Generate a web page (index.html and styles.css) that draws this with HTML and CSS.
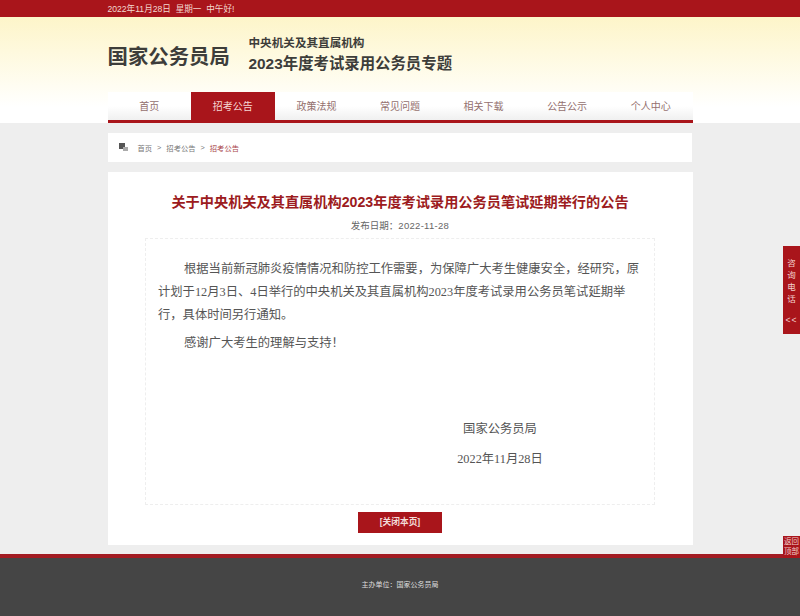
FILE: index.html
```html
<!DOCTYPE html>
<html lang="zh-CN">
<head>
    <meta charset="UTF-8">
    <meta name="viewport" content="width=device-width, initial-scale=1.0">
    <title>关于中央机关及其直属机构2023年度考试录用公务员笔试延期举行的公告</title>
    <link rel="stylesheet" href="styles.css">
</head>
<body>
    <div class="topbar">
        <div class="wrap topbar-text">2022年11月28日&nbsp; 星期一&nbsp; 中午好!</div>
    </div>

    <header class="header">
        <div class="wrap">
            <div class="brand">
                <div class="brand-name">国家公务员局</div>
                <div class="brand-sub">
                    <div class="brand-sub-top">中央机关及其直属机构</div>
                    <div class="brand-sub-main">2023年度考试录用公务员专题</div>
                </div>
            </div>
            <nav class="nav">
                <a class="nav-item">首页</a>
                <a class="nav-item active">招考公告</a>
                <a class="nav-item">政策法规</a>
                <a class="nav-item">常见问题</a>
                <a class="nav-item">相关下载</a>
                <a class="nav-item">公告公示</a>
                <a class="nav-item">个人中心</a>
            </nav>
        </div>
    </header>

    <main class="wrap">
        <div class="crumbs">
            <svg class="crumbs-icon" width="9" height="9" viewBox="0 0 9 9">
                <rect x="0" y="0" width="6" height="6" fill="#555"/>
                <rect x="4" y="4" width="5" height="4" fill="#aaa"/>
            </svg>
            <span>首页</span>
            <span class="crumbs-sep">&gt;</span>
            <span>招考公告</span>
            <span class="crumbs-sep">&gt;</span>
            <span class="crumbs-current">招考公告</span>
        </div>

        <article class="article">
            <h1 class="article-title">关于中央机关及其直属机构2023年度考试录用公务员笔试延期举行的公告</h1>
            <div class="article-date">发布日期：<span class="date-num">2022-11-28</span></div>
            <div class="article-body">
                <p class="para">根据当前新冠肺炎疫情情况和防控工作需要，为保障广大考生健康安全，经研究，原计划于12月3日、4日举行的中央机关及其直属机构2023年度考试录用公务员笔试延期举行，具体时间另行通知。</p>
                <p class="para para-thanks">感谢广大考生的理解与支持！</p>
                <div class="sign">
                    <div>国家公务员局</div>
                    <div class="sign-date">2022年11月28日</div>
                </div>
            </div>
            <a class="close-btn">[关闭本页]</a>
        </article>
    </main>

    <footer class="footer">主办单位：国家公务员局</footer>

    <div class="side-phone">
        <span class="side-phone-text">咨询电话</span>
        <span class="side-phone-arrow">&lt;&lt;</span>
    </div>
    <div class="side-top">返回顶部</div>
</body>
</html>
```

FILE: styles.css
```css
:root {
    --red: #a9151b;
    --page-bg: #eeeeee;
    --cjk: "Liberation Sans", "Noto Sans CJK SC", sans-serif;
}

html, body {
    height: 616px;
    overflow: hidden;
}

body {
    margin: 0;
    background: var(--page-bg);
    font-family: var(--cjk);
    color: #444;
    position: relative;
}

.wrap {
    width: 585px;
    margin: 0 auto;
}

.topbar {
    height: 17px;
    background: var(--red);
}

.topbar-text {
    font-size: 8.6px;
    line-height: 18px;
    color: #f3d9d0;
}

.header {
    height: 106px;
    background: linear-gradient(#fdf5c9, #fffdf2 65%, #ffffff 85%);
}

.brand {
    height: 75px;
    display: flex;
    align-items: center;
    box-sizing: border-box;
}

.brand-name {
    width: 141px;
    font-size: 20.4px;
    font-weight: 700;
    color: #3d3d3a;
}

.brand-sub-top {
    font-size: 11.6px;
    font-weight: 700;
    line-height: 18px;
    color: #3d3d3a;
}

.brand-sub-main {
    font-size: 15.4px;
    font-weight: 700;
    line-height: 24px;
    color: #3d3d3a;
}

.nav {
    display: grid;
    grid-template-columns: repeat(7, 1fr);
    height: 28px;
    border-bottom: 3px solid var(--red);
    background: linear-gradient(#ffffff, #ffffff 50%, #f0f0f0);
}

.nav-item {
    font-size: 10px;
    line-height: 29px;
    text-align: center;
    color: #94706e;
}

.nav-item.active {
    background: var(--red);
    color: #f6d8d4;
}

.crumbs {
    margin-top: 10px;
    height: 29px;
    width: 584px;
    background: #fff;
    display: flex;
    align-items: center;
    box-sizing: border-box;
    padding-left: 11px;
    font-size: 7.3px;
    color: #777;
    gap: 5px;
}

.crumbs-icon {
    margin-right: 5px;
}

.crumbs-current {
    color: #a9454a;
}

.article {
    margin-top: 10px;
    height: 373px;
    background: #fff;
    display: flex;
    flex-direction: column;
    align-items: center;
}

.article-title {
    margin: 20px 0 0;
    font-size: 14.2px;
    line-height: 20px;
    font-weight: 700;
    color: #9c1b20;
}

.article-date {
    margin-top: 7px;
    font-size: 9.5px;
    line-height: 14px;
    color: #666;
}

.date-num {
    letter-spacing: 0.3px;
}

.article-body {
    margin-top: 5px;
    width: 510px;
    height: 267px;
    box-sizing: border-box;
    border: 1px dashed #eeeeee;
    padding: 19px 12px 0 12px;
    font-size: 12.3px;
    line-height: 23px;
    color: #555;
    font-family: "Liberation Serif", "Noto Sans CJK SC", serif;
}

.para {
    margin: 0;
    text-indent: 26px;
}

.para-thanks {
    margin-top: 5px;
}

.sign {
    margin-top: 63px;
    padding-left: 272px;
    width: 140px;
    text-align: center;
}

.sign-date {
    margin-top: 7px;
}

.close-btn {
    margin-top: 7px;
    width: 84px;
    height: 21px;
    background: var(--red);
    color: #f3dcd8;
    font-size: 8.7px;
    line-height: 21px;
    text-align: center;
    font-weight: 700;
}

.footer {
    margin-top: 9px;
    height: 58px;
    border-top: 4px solid #a21b22;
    background: #454545;
    box-sizing: content-box;
    font-size: 7px;
    line-height: 54px;
    text-align: center;
    color: #ddd;
}

.side-phone {
    position: absolute;
    right: 0;
    top: 246px;
    width: 17px;
    height: 88px;
    background: var(--red);
    color: #f2cfcb;
    font-size: 8.5px;
    text-align: center;
    display: flex;
    flex-direction: column;
    align-items: center;
}

.side-phone-text {
    width: 9px;
    margin-top: 11px;
    line-height: 12px;
}

.side-phone-arrow {
    margin-top: 9px;
    line-height: 12px;
    letter-spacing: 1px;
}

.side-top {
    position: absolute;
    right: 0;
    top: 536px;
    width: 17px;
    height: 22px;
    background: var(--red);
    color: #f2cfcb;
    font-size: 7.5px;
    line-height: 10px;
    text-align: center;
    padding-top: 1px;
    box-sizing: border-box;
}
```
